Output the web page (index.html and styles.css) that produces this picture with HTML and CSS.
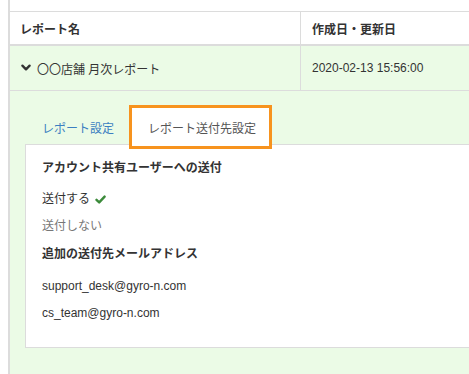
FILE: index.html
```html
<!DOCTYPE html>
<html lang="ja">

<head>
    <meta charset="UTF-8">
    <meta name="viewport" content="width=device-width, initial-scale=1.0">
    <title>レポート</title>
    <link rel="stylesheet" href="styles.css">
</head>

<body>
    <div class="wrapper">
        <div class="row head-row">
            <div class="cell">レポート名</div>
            <div class="cell col2">作成日・更新日</div>
        </div>
        <div class="row data-row">
            <div class="cell">
                <svg class="chevron" width="10" height="8" viewBox="0 0 10 8">
                    <path d="M1.4 1.6 L5 5.4 L8.6 1.6" fill="none" stroke="#333" stroke-width="2.3" stroke-linecap="round" stroke-linejoin="round" />
                </svg>
                〇〇店舗 月次レポート
            </div>
            <div class="cell col2">2020-02-13 15:56:00</div>
        </div>

        <div class="detail">
            <div class="tabs">
                <a class="tab" href="#">レポート設定</a>
                <div class="tab active">レポート送付先設定</div>
            </div>
            <div class="panel">
                <div class="heading">アカウント共有ユーザーへの送付</div>
                <div class="option selected">送付する
                    <svg class="check" width="11" height="9" viewBox="0 0 11 9">
                        <path d="M1.5 4.8 L4.2 7.4 L9.6 1.6" fill="none" stroke="#3b8a3a" stroke-width="2.4" stroke-linecap="round" stroke-linejoin="round" />
                    </svg>
                </div>
                <div class="option off">送付しない</div>
                <div class="heading second">追加の送付先メールアドレス</div>
                <div class="mail first">support_desk@gyro-n.com</div>
                <div class="mail">cs_team@gyro-n.com</div>
            </div>
        </div>
    </div>
</body>

</html>
```

FILE: styles.css
```css
body {
    margin: 0;
    overflow: hidden;
    background-color: #fff;
    font-family: "Liberation Sans", "Noto Sans CJK JP", sans-serif;
    font-size: 12px;
    color: #333;
}

.wrapper {
    display: flex;
    flex-direction: column;
    box-sizing: border-box;
    margin-left: 8px;
    padding-top: 11px;
    height: 100vh;
    border-left: 2px solid #dcdcdc;
}

.row {
    display: grid;
    grid-template-columns: 290px 1fr;
}

.cell {
    display: flex;
    align-items: center;
    padding-left: 10px;
}

.col2 {
    border-left: 1px solid #dcdcdc;
    padding-left: 11px;
}

.head-row {
    height: 32px;
    border-top: 1px solid #dcdcdc;
    border-bottom: 2px solid #dcdcdc;
    font-weight: bold;
}

.data-row {
    height: 44px;
    border-bottom: 1px solid #dcdcdc;
    background-color: #ebfbe6;
}

.chevron {
    margin: 0 6px 0 1px;
}

.detail {
    flex: 1;
    padding: 14px 0 0 15px;
    background-color: #ebfbe6;
}

.tabs {
    display: flex;
    align-items: flex-end;
    margin-bottom: -5px;
}

.tab {
    display: flex;
    align-items: center;
    height: 44px;
    box-sizing: border-box;
    padding: 0 15px 0 17px;
    color: #3b7fc1;
    text-decoration: none;
}

.tab.active {
    position: relative;
    z-index: 1;
    padding: 0 13px 0 16px;
    border: 3px solid #f7931e;
    background-color: #fff;
    color: #555;
}

.panel {
    box-sizing: border-box;
    height: 204px;
    padding: 13px 16px 0;
    background-color: #fff;
    border: 1px solid #dcdcdc;
    border-right: none;
    line-height: 20px;
}

.heading {
    font-weight: bold;
}

.heading.second {
    margin-top: 8px;
}

.option {
    display: flex;
    align-items: center;
    margin-top: 7px;
}

.option.selected {
    margin-top: 11px;
}

.option.off {
    color: #777;
}

.check {
    margin-left: 5px;
}

.mail {
    margin-top: 7px;
}

.mail.first {
    margin-top: 12px;
}
```
